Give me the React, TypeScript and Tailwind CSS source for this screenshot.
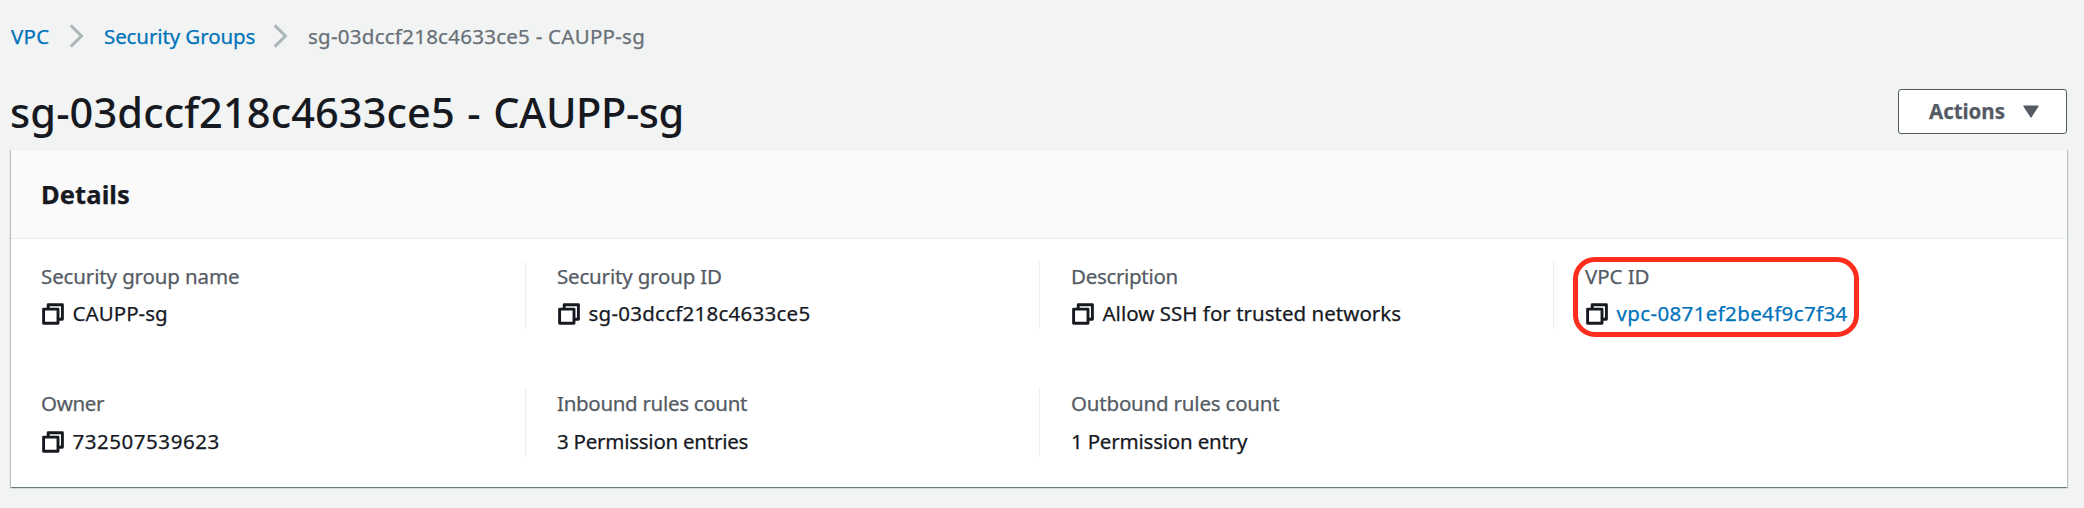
import type { ReactNode } from "react";

function CopyIcon() {
  return (
    <svg className="mt-px h-[22px] w-[22px] shrink-0" viewBox="0 0 22 22" fill="none" stroke="#16191f" strokeWidth="2.9" strokeLinejoin="round">
      <path d="M6.2 5.6V1.7h14.2v14.6h-3.9" />
      <path d="M1.6 6.1h14.4v14.2H1.6z" />
    </svg>
  );
}

function Chevron() {
  return (
    <svg className="h-6 w-4 shrink-0" viewBox="0 0 16 24" fill="none" stroke="#aab7b8" strokeWidth="3">
      <path d="M1.8 1.4L12.4 12L1.8 22.6" />
    </svg>
  );
}

type FieldProps = {
  label: string;
  labelClass: string;
  value: string;
  valueClass: string;
  copy?: boolean;
  className?: string;
  gap?: string;
  children?: ReactNode;
};

function Field({ label, labelClass, value, valueClass, copy, className = "", gap = "mt-2", children }: FieldProps) {
  return (
    <div className={`flex flex-col whitespace-nowrap ${className}`}>
      <span className={`leading-[28px] text-[#545b64] ${labelClass}`}>{label}</span>
      <div className={`flex h-[31px] items-start ${gap}`}>
        {copy && (
          <span className="flex h-[30px] w-[31.5px] shrink-0 items-center pl-px">
            <CopyIcon />
          </span>
        )}
        <span className={`leading-[30px] ${valueClass}`}>{value}</span>
      </div>
      {children}
    </div>
  );
}

const divided = "border-l border-[#eaeded] pl-[31px]";

export default function App() {
  return (
    <div className="h-[508px] w-[2084px] overflow-hidden bg-[#f2f3f3] pt-5 font-['Noto_Sans',sans-serif] text-[20.5px] text-[#16191f] [-webkit-text-stroke:0.25px]">
      <nav className="flex h-8 items-center whitespace-nowrap pl-[11px] leading-8">
        <a className="w-[58px] tracking-[0.3px] text-[#0073bb]">VPC</a>
        <Chevron />
        <a className="ml-[19px] w-[169px] tracking-[-0.1px] text-[#0073bb]">Security Groups</a>
        <Chevron />
        <span className="ml-[19px] tracking-[0.26px] text-[#687078]">sg-03dccf218c4633ce5 - CAUPP-sg</span>
      </nav>

      <header className="mt-8 flex h-[65px] items-start justify-between pl-[10px] pr-[17px]">
        <h1 className="whitespace-nowrap text-[41.5px] font-medium leading-[56px] [-webkit-text-stroke:0px]">
          <span className="tracking-[0.12px] [word-spacing:1.5px]">sg-03dccf218c4633ce5 - </span>
          <span className="tracking-[-0.4px]">CAUPP-sg</span>
        </h1>
        <button className="mt-[5px] flex h-[45px] w-[169px] items-center justify-between rounded-[3px] border-[1.5px] border-[#545b64] bg-white pl-[30px] pr-[27px] font-bold tracking-[-0.05px] text-[#545b64]">
          <span>Actions</span>
          <svg className="h-[13px] w-4" viewBox="0 0 16 13" fill="#545b64" stroke="#545b64" strokeWidth="1.4" strokeLinejoin="round">
            <path d="M1 1.1h14L8 11.8z" />
          </svg>
        </button>
      </header>

      <section className="ml-[11px] h-[338px] w-[2056px] border-t border-[#eaeded] bg-white shadow-[0_1px_1px_0_rgba(0,28,36,0.3),1px_1px_1px_0_rgba(0,28,36,0.2),-1px_1px_1px_0_rgba(0,28,36,0.2)]">
        <div className="h-[89px] border-b border-[#eaeded] bg-[#fafafa] pl-[30px] pt-[27px]">
          <h2 className="text-[25.5px] font-bold leading-[34px] tracking-[0.1px]">Details</h2>
        </div>
        <div className="grid grid-cols-[514px_514px_514px_514px] gap-y-[60px] pt-[23px]">
          <Field className="pl-[30px]" label="Security group name" labelClass="tracking-[-0.126px]" value="CAUPP-sg" valueClass="tracking-[0.05px]" copy />
          <Field className={divided} label="Security group ID" labelClass="tracking-[-0.18px]" value="sg-03dccf218c4633ce5" valueClass="tracking-[0.25px]" copy />
          <Field className={divided} label="Description" labelClass="tracking-[-0.314px]" value="Allow SSH for trusted networks" valueClass="tracking-[0.02px]" copy />
          <Field className={`relative ${divided}`} label="VPC ID" labelClass="tracking-[-0.088px]" value="vpc-0871ef2be4f9c7f34" valueClass="tracking-[0.364px] text-[#0073bb]" copy>
            <div className="absolute left-[19px] top-[-5px] h-[80px] w-[286px] rounded-[22px] border-[5px] border-[#ff2d1e]" />
          </Field>
          <Field className="pl-[30px]" gap="mt-[9px]" label="Owner" labelClass="tracking-[-0.339px]" value="732507539623" valueClass="tracking-[0.54px]" copy />
          <Field className={divided} gap="mt-[9px]" label="Inbound rules count" labelClass="tracking-[-0.312px]" value="3 Permission entries" valueClass="tracking-[-0.248px]" />
          <Field className={divided} gap="mt-[9px]" label="Outbound rules count" labelClass="tracking-[-0.2px]" value="1 Permission entry" valueClass="tracking-[-0.2px]" />
        </div>
      </section>
    </div>
  );
}
